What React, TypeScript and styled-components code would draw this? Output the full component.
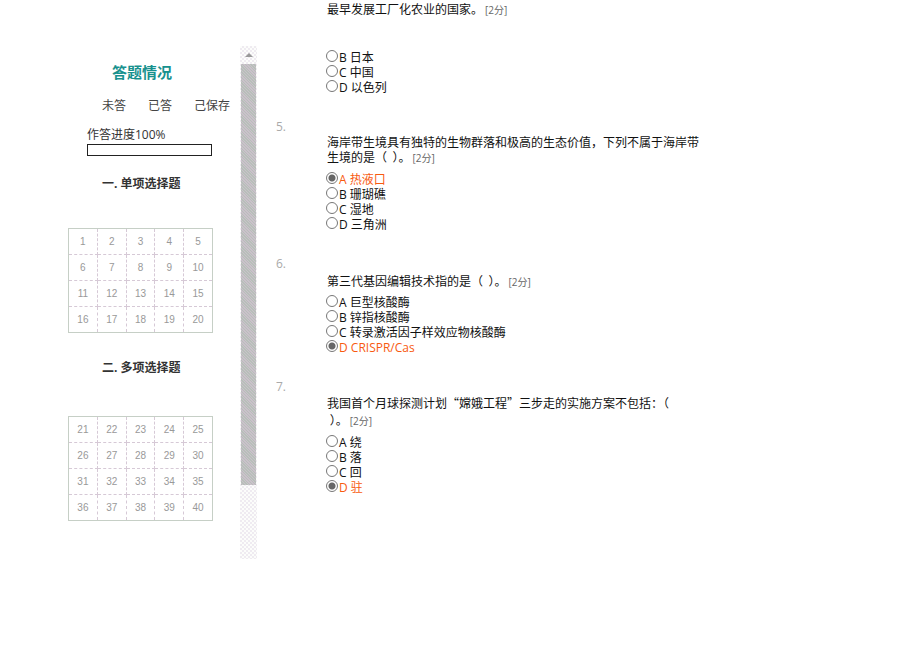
import React from 'react';
import styled, { createGlobalStyle } from 'styled-components';

const cjk = '"Noto Sans CJK SC", sans-serif';
const mixed = '"Open Sans", "Noto Sans CJK SC", sans-serif';

const GlobalStyle = createGlobalStyle`
  * { box-sizing: border-box; }
  body {
    margin: 0;
    background: #fff;
    color: #111;
    font: 12px/15px ${mixed};
  }
`;

const Page = styled.div`
  display: flex;
  align-items: flex-start;
`;

const Panel = styled.aside`
  display: flex;
  flex: none;
  margin-top: 46px;
`;

const Summary = styled.div`
  display: flex;
  flex-direction: column;
  width: 240px;
  padding: 16px 0 38px 68px;
`;

const Title = styled.h1`
  margin: 0 0 16px 44px;
  font: bold 15px/20px ${cjk};
  color: #17918e;
`;

const Legend = styled.ul`
  display: flex;
  gap: 22px;
  margin: 0 0 13px 34px;
  padding: 0;
  list-style: none;
  line-height: 16px;
  color: #444;
  white-space: nowrap;
`;

const Progress = styled.label`
  display: flex;
  flex-direction: column;
  gap: 1px;
  margin: 0 0 20px 19px;
  line-height: 16px;
  color: #333;
`;

const Bar = styled.progress`
  appearance: none;
  width: 125px;
  height: 12px;
  border: 1px solid #222;
  background: #fff;
  &::-webkit-progress-bar { background: #fff; }
  &::-webkit-progress-value { background: #fff; }
`;

const SectionTitle = styled.h2`
  margin: 0 0 36px 34px;
  font: bold 12px/16px ${mixed};
  color: #333;
`;

const Sheet = styled.table`
  width: 145px;
  border-collapse: collapse;
  table-layout: fixed;
  border: 1px solid #c6cfc6;
  & + h2 { margin-top: 27px; margin-bottom: 40px; }
`;

const Cell = styled.td`
  height: 26px;
  padding: 0;
  border: 1px dashed #d6c9d6;
  text-align: center;
  font: 10px/12px "Liberation Sans", sans-serif;
  color: #999;
`;

const ScrollBar = styled.div`
  display: flex;
  flex-direction: column;
  width: 17px;
  background: repeating-conic-gradient(#efebf1 0 25%, #fcfdfb 0 50%) 0 0 / 4px 4px;
`;

const ScrollButton = styled.button`
  display: flex;
  align-items: center;
  justify-content: center;
  height: 18px;
  padding: 0;
  border: 0;
  background: none;
`;

const Thumb = styled.div`
  flex: 422;
  margin: 0 1px;
  background: repeating-linear-gradient(45deg, #b7c0b9 0 1px, #cbc0cb 1px 2px);
`;

const Track = styled.div`
  flex: 74;
`;

const Questions = styled.main`
  display: flex;
  flex: 1;
  flex-direction: column;
  gap: 25px;
  min-width: 0;
  padding: 1px 0 40px 19px;
`;

const Question = styled.article`
  display: flex;
  flex-direction: column;
`;

const Num = styled.div`
  line-height: 14px;
  color: #aaa;
`;

const Body = styled.fieldset<{ $top: number; $gap: number }>`
  display: flex;
  flex-direction: column;
  gap: ${(p) => p.$gap}px;
  min-width: 0;
  margin: ${(p) => p.$top}px 0 0 50px;
  padding: 0;
  border: 0;
`;

const Stem = styled.div<{ $line: number }>`
  padding-left: 1px;
  font-family: ${cjk};
  line-height: ${(p) => p.$line}px;
  white-space: pre;
`;

const Score = styled.span`
  margin-left: 2px;
  font: 10px/12px ${mixed};
  color: #666;
`;

const Options = styled.div`
  display: flex;
  flex-direction: column;
  align-items: flex-start;
`;

const Option = styled.label<{ $on: boolean }>`
  display: flex;
  align-items: flex-start;
  gap: 1px;
  line-height: 15px;
  color: ${(p) => (p.$on ? '#f85a10' : '#111')};
  white-space: nowrap;
`;

const Radio = styled.input`
  appearance: none;
  width: 12px;
  height: 12px;
  margin: 0;
  border: 1px solid #777;
  border-radius: 50%;
  background: #fff;
  &:checked { background: radial-gradient(circle, #666 0 3px, #fff 4px); }
`;

type Item = {
  num?: string;
  lines: string[];
  lineHeight?: number;
  top: number;
  gap: number;
  options: string[];
  chosen?: string;
};

const items: Item[] = [
  { lines: ['最早发展工厂化农业的国家。'], top: 0, gap: 34, options: ['B 日本', 'C 中国', 'D 以色列'] },
  {
    num: '5.',
    lines: ['海岸带生境具有独特的生物群落和极高的生态价值，下列不属于海岸带', '生境的是（  ）。'],
    top: 0,
    gap: 8,
    options: ['A 热液口', 'B 珊瑚礁', 'C 湿地', 'D 三角洲'],
    chosen: 'A',
  },
  {
    num: '6.',
    lines: ['第三代基因编辑技术指的是（  ）。'],
    top: 2,
    gap: 7,
    options: ['A 巨型核酸酶', 'B 锌指核酸酶', 'C 转录激活因子样效应物核酸酶', 'D CRISPR/Cas'],
    chosen: 'D',
  },
  {
    num: '7.',
    lines: ['我国首个月球探测计划“嫦娥工程”三步走的实施方案不包括：（', ' ）。'],
    lineHeight: 17,
    top: 0,
    gap: 7,
    options: ['A 绕', 'B 落', 'C 回', 'D 驻'],
    chosen: 'D',
  },
];

function AnswerSheet({ start }: { start: number }) {
  return (
    <Sheet>
      <tbody>
        {[0, 1, 2, 3].map((r) => (
          <tr key={r}>
            {[0, 1, 2, 3, 4].map((c) => (
              <Cell key={c}>{start + r * 5 + c}</Cell>
            ))}
          </tr>
        ))}
      </tbody>
    </Sheet>
  );
}

export default function App() {
  return (
    <>
      <GlobalStyle />
      <Page lang="zh-CN">
        <Panel>
          <Summary>
            <Title>答题情况</Title>
            <Legend>
              <li>未答</li>
              <li>已答</li>
              <li>己保存</li>
            </Legend>
            <Progress>
              作答进度100%
              <Bar value={100} max={100} />
            </Progress>
            <SectionTitle>一. 单项选择题</SectionTitle>
            <AnswerSheet start={1} />
            <SectionTitle>二. 多项选择题</SectionTitle>
            <AnswerSheet start={21} />
          </Summary>
          <ScrollBar>
            <ScrollButton type="button" aria-label="向上滚动">
              <svg width="8" height="4" viewBox="0 0 8 4">
                <path d="M0 4L4 0L8 4Z" fill="#999" />
              </svg>
            </ScrollButton>
            <Thumb />
            <Track />
          </ScrollBar>
        </Panel>
        <Questions>
          {items.map((q, i) => (
            <Question key={i}>
              {q.num && <Num>{q.num}</Num>}
              <Body $top={q.top} $gap={q.gap}>
                <Stem $line={q.lineHeight ?? 15}>
                  {q.lines.join('\n')}
                  <Score>[2分]</Score>
                </Stem>
                <Options>
                  {q.options.map((o) => {
                    const on = o[0] === q.chosen;
                    return (
                      <Option key={o} $on={on}>
                        <Radio type="radio" name={`question-${i}`} value={o[0]} defaultChecked={on} />
                        {o}
                      </Option>
                    );
                  })}
                </Options>
              </Body>
            </Question>
          ))}
        </Questions>
      </Page>
    </>
  );
}
